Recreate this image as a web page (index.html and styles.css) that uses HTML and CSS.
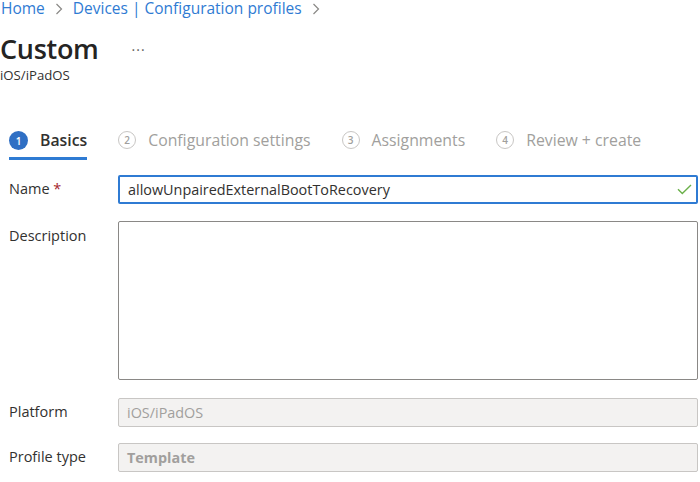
FILE: index.html
```html
<!DOCTYPE html>
<html>
<head>
<meta charset="utf-8">
<link rel="stylesheet" href="styles.css">
</head>
<body>
<div class="page">
  <nav class="crumbs">
    <a class="crumb">Home</a>
    <svg class="chev" width="8" height="12" viewBox="0 0 8 12"><path d="M1.5 1 L6.5 6 L1.5 11" fill="none" stroke="#8a8886" stroke-width="1.2"/></svg>
    <a class="crumb">Devices | Configuration profiles</a>
    <svg class="chev" width="8" height="12" viewBox="0 0 8 12"><path d="M1.5 1 L6.5 6 L1.5 11" fill="none" stroke="#8a8886" stroke-width="1.2"/></svg>
  </nav>
  <header class="head">
    <div class="title-row">
      <h1 class="title">Custom</h1>
      <span class="more">···</span>
    </div>
    <div class="subtitle">iOS/iPadOS</div>
  </header>
  <div class="steps">
    <div class="step active">
      <span class="num">1</span><span class="label">Basics</span>
    </div>
    <div class="step">
      <span class="num">2</span><span class="label">Configuration settings</span>
    </div>
    <div class="step">
      <span class="num">3</span><span class="label">Assignments</span>
    </div>
    <div class="step">
      <span class="num">4</span><span class="label">Review + create</span>
    </div>
  </div>
  <div class="form">
    <div class="row">
      <label class="lbl">Name <span class="req">*</span></label>
      <div class="field focus">
        <span class="val">allowUnpairedExternalBootToRecovery</span>
        <svg class="check" width="15" height="11" viewBox="0 0 15 11"><path d="M1 5.2 L5.3 9.5 L14 1" fill="none" stroke="#6bb04a" stroke-width="1.4"/></svg>
      </div>
    </div>
    <div class="row desc-row">
      <label class="lbl">Description</label>
      <div class="field area"></div>
    </div>
    <div class="row ro-row">
      <label class="lbl">Platform</label>
      <div class="field ro"><span class="val dim">iOS/iPadOS</span></div>
    </div>
    <div class="row ro-row">
      <label class="lbl">Profile type</label>
      <div class="field ro"><span class="val dim bold">Template</span></div>
    </div>
  </div>
</div>
</body>
</html>
```
FILE: styles.css
```css
html, body { margin: 0; padding: 0; background: #fff; }
body { font-family: "Open Sans", "Noto Sans", sans-serif; color: #323130; width: 700px; height: 482px; overflow: hidden; }
.page { padding: 0 2px 0 0; }
.crumbs { display: flex; align-items: center; gap: 9px; height: 17px; padding-left: 1px; }
.crumb { color: #2f7bd3; font-size: 15.5px; line-height: 17px; }
.chev { margin: 0 1px; }
.head { margin-top: 17px; }
.title-row { display: flex; align-items: center; height: 30px; }
.title { margin: 0; font-size: 27px; font-weight: 600; line-height: 30px; letter-spacing: -0.3px; color: #252423; }
.more { margin-left: 33px; font-size: 14px; color: #605e5c; letter-spacing: 1px; }
.subtitle { font-size: 13.2px; line-height: 16px; margin-top: 3px; color: #323130; }
.steps { display: flex; margin: 40px 0 0 9px; gap: 31px; }
.step { display: flex; align-items: flex-start; gap: 12px; border-bottom: 3px solid transparent; padding-top: 7px; box-sizing: border-box; height: 37px; }
.step.active { border-bottom-color: #2f7bd3; }
.num { width: 16px; height: 16px; border-radius: 50%; border: 1.5px solid #c8c6c4; color: #a19f9d; font-size: 10px; font-weight: 600; display: flex; align-items: center; justify-content: center; box-sizing: content-box; margin-top: 1px; }
.step.active .num { width: 19px; height: 19px; border: none; background: #2f6fc4; color: #fff; }
.label { font-size: 15.8px; line-height: 20px; color: #a19f9d; }
.step.active .label { color: #323130; font-weight: 600; }
.form { margin: 15px 0 0 9px; display: flex; flex-direction: column; }
.row { display: flex; }
.lbl { width: 109px; flex: none; font-size: 14.5px; line-height: 20px; padding-top: 4px; color: #323130; }
.req { color: #a4262c; }
.field { flex: 1; box-sizing: border-box; display: flex; align-items: center; padding: 0 8px; }
.field.focus { height: 29px; border: 2px solid #2f7bd3; border-radius: 2px; justify-content: space-between; padding-right: 4px; }
.val { font-size: 14.4px; color: #323130; }
.desc-row { margin-top: 17px; }
.desc-row .lbl { padding-top: 5px; }
.field.area { height: 159px; border: 1px solid #8a8886; border-radius: 2px; }
.ro-row { margin-top: 18px; }
.ro-row + .ro-row { margin-top: 16px; }
.field.ro { height: 29px; border: 1px solid #c8c6c4; border-radius: 2px; background: #f3f2f1; }
.dim { color: #a19f9d; }
.bold { font-weight: 700; }
```
